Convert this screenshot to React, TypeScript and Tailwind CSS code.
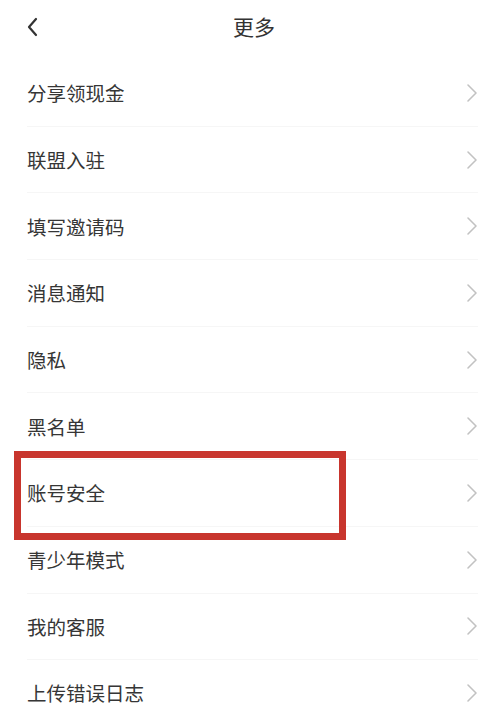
import React from 'react';

const items = [
  '分享领现金',
  '联盟入驻',
  '填写邀请码',
  '消息通知',
  '隐私',
  '黑名单',
  '账号安全',
  '青少年模式',
  '我的客服',
  '上传错误日志',
];

function Chevron() {
  return (
    <svg width="12" height="20" viewBox="0 0 12 20" fill="none">
      <path d="M2 2 L10 10 L2 18" stroke="#c2c2c2" strokeWidth="1.6" strokeLinecap="round" strokeLinejoin="round" />
    </svg>
  );
}

export default function App() {
  return (
    <div
      className="relative w-[490px] h-[725px] overflow-hidden bg-white"
      style={{ fontFamily: '"Noto Sans CJK SC", "Noto Sans", sans-serif' }}
    >
      {/* Header */}
      <div className="relative flex h-[60px] items-center justify-center">
        <button className="absolute left-[22px] top-[12px] p-1">
          <svg width="14" height="22" viewBox="0 0 14 22" fill="none">
            <path d="M10 3 L3 11 L10 19" stroke="#333" strokeWidth="2.2" strokeLinecap="round" strokeLinejoin="round" />
          </svg>
        </button>
        <h1 className="mt-[-6px] pl-[18px] text-[21px] text-[#333]">更多</h1>
      </div>

      {/* List */}
      <div className="flex flex-col">
        {items.map((label) => (
          <div key={label} className="flex h-[66.7px] items-center pl-[27px] pr-[12px]">
            <div className="flex h-full flex-1 items-center justify-between border-b border-[#f6f6f6]">
              <span className="text-[19.5px] text-[#363636]">{label}</span>
              <Chevron />
            </div>
          </div>
        ))}
      </div>

      {/* Highlight */}
      <div className="absolute left-[14px] top-[451px] h-[89px] w-[332px] border-[7px] border-[#c8352d]" />
    </div>
  );
}
